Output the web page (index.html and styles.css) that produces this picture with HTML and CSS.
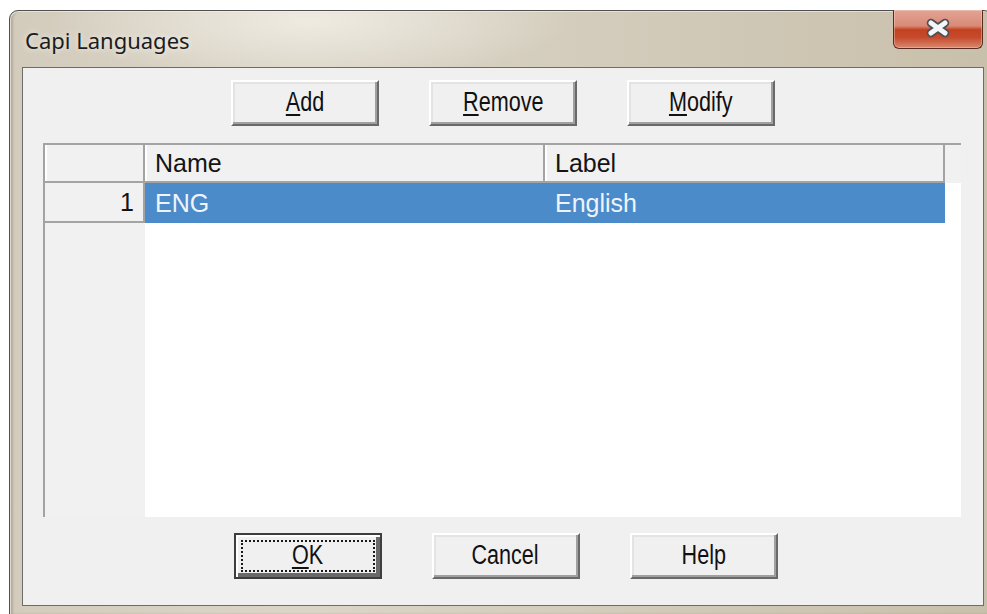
FILE: index.html
```html
<!DOCTYPE html>
<html lang="en">
<head>
<meta charset="utf-8">
<title>Capi Languages</title>
<link rel="stylesheet" href="styles.css">
</head>
<body>
<div class="window">
  <div class="titlebar">
    <span class="title">Capi Languages</span>
    <button class="close" aria-label="Close">
      <svg width="30" height="22" viewBox="0 0 30 22">
        <path d="M8 6 L22 16 M22 6 L8 16" stroke="#4d4f55" stroke-width="8.5" stroke-linecap="round" fill="none"/>
        <path d="M8 6 L22 16 M22 6 L8 16" stroke="#f4f5f7" stroke-width="5" stroke-linecap="round" fill="none"/>
      </svg>
    </button>
  </div>
  <div class="client">
    <div class="btnrow top">
      <button class="btn"><span class="cap"><u>A</u>dd</span></button>
      <button class="btn"><span class="cap"><u>R</u>emove</span></button>
      <button class="btn"><span class="cap"><u>M</u>odify</span></button>
    </div>
    <div class="grid">
      <div class="cell corner"></div>
      <div class="cell colhdr">Name</div>
      <div class="cell colhdr">Label</div>
      <div class="cell hdrfill"></div>
      <div class="cell rowhdr">1</div>
      <div class="cell sel">ENG</div>
      <div class="cell sel">English</div>
      <div class="cell blank"></div>
      <div class="cell rowfill"></div>
      <div class="cell datafill"></div>
    </div>
    <div class="btnrow bottom">
      <button class="btn default"><span class="cap"><u>O</u>K</span></button>
      <button class="btn"><span class="cap">Cancel</span></button>
      <button class="btn"><span class="cap">Help</span></button>
    </div>
  </div>
</div>
</body>
</html>
```
FILE: styles.css
```css
* { box-sizing: border-box; }

html, body {
  margin: 0;
  background: #ffffff;
  width: 987px;
  height: 614px;
  overflow: hidden;
}

/* window frame */
.window {
  margin: 10px 0 0 9px;
  width: 984px;
  height: 605px;
  border: 1px solid #4f4f4f;
  border-radius: 9px 9px 0 0;
  padding: 0 8px 8px 12px;
  display: flex;
  flex-direction: column;
  background:
    radial-gradient(ellipse 260px 60px at 300px 10px, rgba(245, 242, 234, 0.75), rgba(245, 242, 234, 0) 100%),
    linear-gradient(90deg, #d3ccbd 0%, #dbd5c8 30%, #d3ccbc 60%, #c9c0ab 100%);
  box-shadow: inset 1px 1px 0 rgba(255, 255, 255, 0.55), inset 3px 0 2px rgba(90, 80, 60, 0.25);
}

.titlebar {
  height: 56px;
  flex: none;
  display: flex;
  justify-content: space-between;
  align-items: flex-start;
}

.title {
  font-family: "Noto Sans", "Open Sans", sans-serif;
  font-size: 22px;
  color: #1c1c1c;
  padding: 14px 0 0 3px;
  text-shadow: 0 0 6px rgba(255, 255, 255, 0.8);
}

.close {
  width: 90px;
  height: 39px;
  margin: -1px 1px 0 0;
  padding: 0;
  border: 1px solid #5b2b22;
  border-top: none;
  border-radius: 0 0 6px 6px;
  background: linear-gradient(#e3a495 0%, #d88a77 42%, #c4411f 52%, #c54a2c 72%, #d9896f 100%);
  box-shadow: inset 0 0 0 1px rgba(255, 230, 220, 0.35);
  display: flex;
  align-items: center;
  justify-content: center;
}

.close svg { display: block; margin-top: -2px; }

/* client area */
.client {
  height: 539px;
  flex: none;
  border: 1px solid #6c6c6c;
  background: #f0f0f0;
  display: flex;
  flex-direction: column;
}

.btnrow {
  display: flex;
  justify-content: center;
  gap: 50px;
}

.btnrow.top { padding-top: 12px; }
.btnrow.bottom { margin-top: 16px; padding-left: 5px; }

.btn {
  width: 148px;
  height: 46px;
  padding: 0;
  background: #f0f0f0;
  border: 2px solid;
  border-color: #ffffff #696969 #696969 #ffffff;
  box-shadow: inset -2px -2px 0 #a0a0a0, inset 2px 2px 0 #e3e3e3;
  font-family: "Liberation Sans", Arial, sans-serif;
  font-size: 27px;
  color: #111;
  display: flex;
  align-items: center;
  justify-content: center;
}

/* narrow, tall caption like the classic dialog font */
.btn .cap {
  display: inline-block;
  transform: scaleX(0.8);
  line-height: 1;
  margin-top: -1px;
}

.btn u {
  text-decoration-thickness: 2px;
  text-underline-offset: 3px;
}

.btn.default {
  border: 2px solid #3d3d3d;
  box-shadow: inset 2px 2px 0 #ffffff, inset -4px -4px 0 #696969, inset -2px -2px 0 #a0a0a0;
  outline: 2px dotted #1a1a1a;
  outline-offset: -9px;
}

/* language grid */
.grid {
  margin: 17px 0 0 20px;
  width: 918px;
  height: 374px;
  border-top: 2px solid #a3a3a3;
  border-left: 2px solid #a3a3a3;
  display: grid;
  grid-template-columns: 100px 400px 400px 16px;
  grid-template-rows: 38px 40px 1fr;
  font-family: "Liberation Sans", Arial, sans-serif;
  font-size: 25px;
}

.cell {
  display: flex;
  align-items: center;
  white-space: nowrap;
}

.corner, .colhdr {
  background: #f0f1f0;
  border-right: 2px solid #a3a3a3;
  border-bottom: 2px solid #a3a3a3;
  box-shadow: inset 2px 0 0 #ffffff;
}

.colhdr {
  color: #141414;
  padding-left: 10px;
}

.hdrfill { background: #f0f1f0; }

.rowhdr {
  background: #f0f1f0;
  border-right: 2px solid #a3a3a3;
  border-bottom: 2px solid #a3a3a3;
  justify-content: flex-end;
  padding-right: 9px;
  color: #141414;
}

.sel {
  background: #4c8bca;
  color: #eef4fa;
  padding-left: 10px;
}

.blank { background: #ffffff; }

.rowfill { background: #f0f1f0; }

.datafill {
  grid-column: 2 / 5;
  background: #ffffff;
}
```
